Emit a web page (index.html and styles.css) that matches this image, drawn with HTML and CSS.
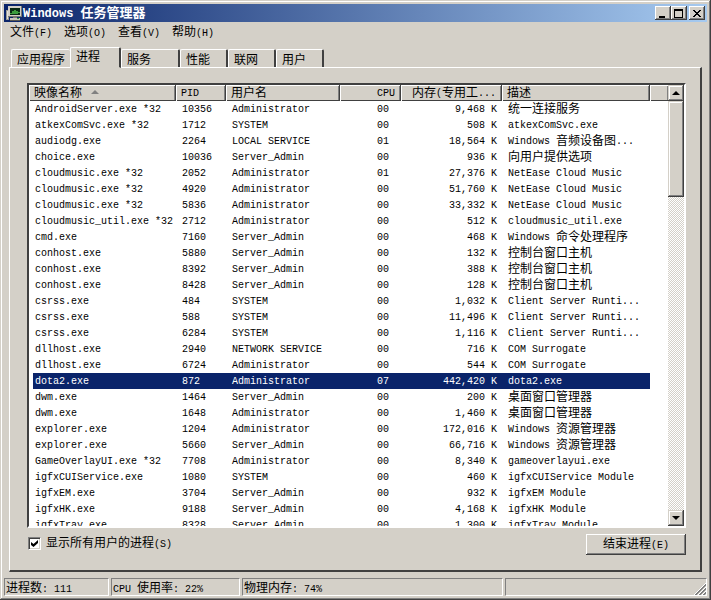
FILE: index.html
```html
<!DOCTYPE html>
<html lang="zh-CN">
<head>
  <meta charset="UTF-8" />
  <meta name="viewport" content="width=device-width, initial-scale=1.0"/>
  <title>Windows 任务管理器</title>
  <link rel="stylesheet" href="styles.css">
</head>
<body>
<div class="window">

  <!-- Title bar -->
  <header class="titlebar">
    <svg class="app-icon" width="16" height="16" viewBox="0 0 16 16" shape-rendering="crispEdges">
      <path d="M0 5h3v10H0z" fill="#9a9a94"/>
      <path d="M1 6h1v8H1z" fill="#e4e2da"/>
      <path d="M2 1h14v11H2z" fill="#77776f"/>
      <path d="M2 1h13v10H2z" fill="#d4d0c8"/>
      <path d="M4 3h10v7H4z" fill="#0b2b14"/>
      <path d="M4 8h2V6h2V5h2v1h2v1h2v1h-2v1H4z" fill="#3c9c3c"/>
      <path d="M7 12h4v1H7z" fill="#77776f"/>
      <path d="M4 13h10v2H4z" fill="#c8c6bc"/>
      <path d="M4 15h10v1H4z" fill="#55554f"/>
      <path d="M11 13h2v1h-2z" fill="#3c9c3c"/>
    </svg>
    <h1>Windows <span class="cn">任务管理器</span></h1>
    <div class="title-buttons">
      <button class="title-btn" aria-label="最小化">
        <svg width="10" height="9" viewBox="0 0 10 9"><path d="M1 7h6v2H1z"/></svg>
      </button>
      <button class="title-btn" aria-label="最大化">
        <svg width="10" height="9" viewBox="0 0 10 9" shape-rendering="crispEdges"><path fill-rule="evenodd" d="M0 0h9v9H0zM1 2v6h7V2z"/></svg>
      </button>
      <button class="title-btn close" aria-label="关闭">
        <svg width="10" height="9" viewBox="0 0 10 9" shape-rendering="crispEdges"><path d="M1 1h2v1h1v1h2V2h1V1h2v1H8v1H7v1H6v1h1v1h1v1h1v1H7V7H6V6H4v1H3v1H1V7h1V6h1V5h1V4H3V3H2V2H1z"/></svg>
      </button>
    </div>
  </header>

  <nav class="menu">
    <button><span class="cn">文件</span>(F)</button>
    <button><span class="cn">选项</span>(O)</button>
    <button><span class="cn">查看</span>(V)</button>
    <button><span class="cn">帮助</span>(H)</button>
  </nav>

  <div class="tabs" role="tablist">
    <button class="tab tab-long cn" role="tab">应用程序</button>
    <button class="tab active cn" role="tab" aria-selected="true">进程</button>
    <button class="tab tab-long cn" role="tab">服务</button>
    <button class="tab cn" role="tab">性能</button>
    <button class="tab cn" role="tab">联网</button>
    <button class="tab cn" role="tab">用户</button>
  </div>

  <main class="panel">
    <div class="list">
      <div class="list-view">
        <table>
          <colgroup>
            <col class="col-name"><col class="col-pid"><col class="col-user"><col class="col-cpu"><col class="col-mem"><col class="col-desc"><col>
          </colgroup>
          <thead>
            <tr>
              <th><span class="cn">映像名称</span><i class="sort"></i></th>
              <th>PID</th>
              <th><span class="cn">用户名</span></th>
              <th class="num">CPU</th>
              <th class="num"><span class="cn">内存</span>(<span class="cn">专用工</span>...</th>
              <th><span class="cn">描述</span></th>
              <th></th>
            </tr>
          </thead>
          <tbody id="processList"></tbody>
        </table>
      </div>
      <div class="scrollbar">
        <button class="scroll-btn" aria-label="向上"><i class="arrow up"></i></button>
        <div class="thumb"></div>
        <button class="scroll-btn bottom" aria-label="向下"><i class="arrow down"></i></button>
      </div>
    </div>

    <div class="actions">
      <label class="show-all" for="showAll">
        <input type="checkbox" id="showAll" checked>
        <span><span class="cn">显示所有用户的进程</span>(S)</span>
      </label>
      <button class="end-btn"><span class="cn">结束进程</span>(E)</button>
    </div>
  </main>

  <footer class="status">
    <div class="pane pane-count"><span class="cn">进程数</span>: 111</div>
    <div class="pane pane-cpu">CPU <span class="cn">使用率</span>: 22%</div>
    <div class="pane pane-mem"><span class="cn">物理内存</span>: 74%</div>
    <div class="pane pane-rest">
      <svg width="12" height="12" viewBox="0 0 12 12">
        <path d="M0 12L12 0M4 12l8-8M8 12l4-4" stroke="#fff" fill="none"/>
        <path d="M1 12L12 1M2 12L12 2M5 12l7-7M6 12l6-6M9 12l3-3M10 12l2-2" stroke="#808080" fill="none"/>
      </svg>
    </div>
  </footer>

</div>

  <script>
    // name, pid, user, cpu, memory, description
    const processes = [
      ["AndroidServer.exe *32", "10356", "Administrator", "00", "9,468 K", "统一连接服务"],
      ["atkexComSvc.exe *32", "1712", "SYSTEM", "00", "508 K", "atkexComSvc.exe"],
      ["audiodg.exe", "2264", "LOCAL SERVICE", "01", "18,564 K", "Windows 音频设备图..."],
      ["choice.exe", "10036", "Server_Admin", "00", "936 K", "向用户提供选项"],
      ["cloudmusic.exe *32", "2052", "Administrator", "01", "27,376 K", "NetEase Cloud Music"],
      ["cloudmusic.exe *32", "4920", "Administrator", "00", "51,760 K", "NetEase Cloud Music"],
      ["cloudmusic.exe *32", "5836", "Administrator", "00", "33,332 K", "NetEase Cloud Music"],
      ["cloudmusic_util.exe *32", "2712", "Administrator", "00", "512 K", "cloudmusic_util.exe"],
      ["cmd.exe", "7160", "Server_Admin", "00", "468 K", "Windows 命令处理程序"],
      ["conhost.exe", "5880", "Server_Admin", "00", "132 K", "控制台窗口主机"],
      ["conhost.exe", "8392", "Server_Admin", "00", "388 K", "控制台窗口主机"],
      ["conhost.exe", "8428", "Server_Admin", "00", "128 K", "控制台窗口主机"],
      ["csrss.exe", "484", "SYSTEM", "00", "1,032 K", "Client Server Runti..."],
      ["csrss.exe", "588", "SYSTEM", "00", "11,496 K", "Client Server Runti..."],
      ["csrss.exe", "6284", "SYSTEM", "00", "1,116 K", "Client Server Runti..."],
      ["dllhost.exe", "2940", "NETWORK SERVICE", "00", "716 K", "COM Surrogate"],
      ["dllhost.exe", "6724", "Administrator", "00", "544 K", "COM Surrogate"],
      ["dota2.exe", "872", "Administrator", "07", "442,420 K", "dota2.exe"],
      ["dwm.exe", "1464", "Server_Admin", "00", "200 K", "桌面窗口管理器"],
      ["dwm.exe", "1648", "Administrator", "00", "1,460 K", "桌面窗口管理器"],
      ["explorer.exe", "1204", "Administrator", "00", "172,016 K", "Windows 资源管理器"],
      ["explorer.exe", "5660", "Server_Admin", "00", "66,716 K", "Windows 资源管理器"],
      ["GameOverlayUI.exe *32", "7708", "Administrator", "00", "8,340 K", "gameoverlayui.exe"],
      ["igfxCUIService.exe", "1080", "SYSTEM", "00", "460 K", "igfxCUIService Module"],
      ["igfxEM.exe", "3704", "Server_Admin", "00", "932 K", "igfxEM Module"],
      ["igfxHK.exe", "9188", "Server_Admin", "00", "4,168 K", "igfxHK Module"],
      ["igfxTray.exe", "8328", "Server_Admin", "00", "1,300 K", "igfxTray Module"]
    ];

    const processList = document.getElementById("processList");

    function renderProcesses(selected) {
      processList.innerHTML = processes.map(p => {
        const cells = p.map((text, i) => {
          const cls = i === 3 || i === 4 ? ' class="num"' : "";
          return `<td${cls}>${text.replace(/[\u4e00-\u9fff]+/g, '<span class="cn">$&</span>')}</td>`;
        }).join("");
        return `<tr${p[0] === selected ? ' class="selected"' : ""}>${cells}<td></td></tr>`;
      }).join("");
    }

    renderProcesses("dota2.exe");
  </script>
</body>
</html>
```

FILE: styles.css
```css
* {
  box-sizing: border-box;
}

body {
  margin: 0;
  background: #d4d0c8;
  color: #000;
  font-family: "Liberation Mono", "Noto Sans CJK SC", monospace;
  font-size: 10px;
  line-height: 16px;
}

button {
  margin: 0;
  padding: 0;
  border: none;
  background: #d4d0c8;
  color: inherit;
  font: inherit;
}

.cn {
  font-family: "Noto Sans CJK SC", sans-serif;
  font-size: 12px;
  line-height: 16px;
}

.window {
  display: flex;
  flex-direction: column;
  height: 100vh;
  padding: 4px;
  box-shadow: inset -1px -1px #404040, inset 1px 1px #d4d0c8, inset -2px -2px #808080, inset 2px 2px #fff;
}

/* title bar */
.titlebar {
  display: flex;
  align-items: center;
  height: 18px;
  padding: 0 2px;
  background: linear-gradient(to right, #0a246a, #a6caf0);
}

.titlebar h1 {
  flex: 1;
  margin: 0 0 0 1px;
  color: #fff;
  font-size: 12px;
  line-height: 18px;
  white-space: nowrap;
}

.titlebar .cn {
  font-size: 13px;
  line-height: 18px;
}

.title-buttons {
  display: flex;
}

.title-btn {
  display: flex;
  align-items: center;
  justify-content: center;
  width: 16px;
  height: 14px;
  box-shadow: inset -1px -1px #404040, inset 1px 1px #fff, inset -2px -2px #808080;
}

.title-btn.close {
  margin-left: 2px;
}

/* menu */
.menu {
  display: flex;
  gap: 12px;
  height: 20px;
  padding: 0 6px;
}

.menu button {
  background: none;
}

/* tabs */
.tabs {
  display: flex;
  align-items: flex-end;
  height: 26px;
  margin: 0 6px -1px 7px;
}

.tab {
  width: 48px;
  height: 19px;
  padding: 0 5px;
  border-top: 1px solid #fff;
  border-left: 1px solid #fff;
  border-right: 2px solid #404040;
  border-bottom: 1px solid #fff;
  border-radius: 2px 2px 0 0;
  text-align: left;
}

.tab-long {
  width: 59px;
}

.tab:first-child {
  border-right: none;
}

.tab.active {
  width: 51px;
  height: 21px;
  padding-bottom: 4px;
  border-bottom-color: #d4d0c8;
  z-index: 1;
}

/* panel */
.panel {
  display: flex;
  flex: 1;
  flex-direction: column;
  min-height: 0;
  margin: 0 5px;
  padding: 15px 14px;
  border: 1px solid #fff;
  border-right: 2px solid #404040;
  border-bottom: 2px solid #404040;
}

.list {
  display: flex;
  flex: 1;
  min-height: 0;
  margin: 0 0 0 3px;
  border: 2px solid;
  border-color: #404040 #fff #fff #404040;
  background: #fff;
}

.list-view {
  flex: 1;
  overflow: hidden;
}

table {
  width: 100%;
  table-layout: fixed;
  border-collapse: separate;
  border-spacing: 0;
}

.col-name { width: 147px; }
.col-pid { width: 50px; }
.col-user { width: 114px; }
.col-cpu { width: 61px; }
.col-mem { width: 101px; }
.col-desc { width: 148px; }

th, td {
  height: 16px;
  text-align: left;
  vertical-align: top;
  white-space: nowrap;
  font-weight: normal;
  line-height: 14px;
}

th {
  padding: 2px 5px 0;
  border-right: 1px solid #404040;
  background: #d4d0c8;
  box-shadow: inset 1px 1px #fff, inset 0 -1px #404040, inset -1px 0 #808080;
}

th:last-child {
  border-right: none;
}

td {
  padding: 2px 12px 0 6px;
}

td:first-child {
  padding: 2px 0 0 2px;
  border-left: 4px solid #fff;
}

td:nth-child(5) {
  padding-right: 5px;
}

tr .num {
  text-align: right;
}

/* keeps mixed rows as high as the plain ones */
td .cn, th .cn {
  line-height: 0;
  vertical-align: -1px;
}

.selected td:not(:last-child) {
  background: #0a246a;
  color: #fff;
}

.sort {
  display: inline-block;
  margin-left: 9px;
  border: 4px solid transparent;
  border-top: none;
  border-bottom-color: #808080;
  vertical-align: 2px;
}

/* scrollbar */
.scrollbar {
  display: flex;
  flex-direction: column;
  width: 16px;
  background: repeating-conic-gradient(#fff 0 25%, #d4d0c8 0 50%) 0 0 / 2px 2px;
}

.scroll-btn, .thumb {
  flex: none;
  width: 16px;
  height: 16px;
  background: #d4d0c8;
  box-shadow: inset -1px -1px #404040, inset 1px 1px #d4d0c8, inset -2px -2px #808080, inset 2px 2px #fff;
}

.scroll-btn {
  display: flex;
  align-items: center;
  justify-content: center;
}

.thumb {
  height: 96px;
}

.scroll-btn.bottom {
  margin-top: auto;
}

.arrow {
  border: 4px solid transparent;
}

.arrow.up {
  border-top: none;
  border-bottom-color: #000;
}

.arrow.down {
  border-bottom: none;
  border-top-color: #000;
}

/* bottom row of the panel */
.actions {
  display: flex;
  align-items: flex-start;
  justify-content: space-between;
  padding: 6px 0 0 4px;
}

.show-all {
  display: flex;
  align-items: center;
  gap: 5px;
}

.show-all input {
  display: flex;
  align-items: center;
  justify-content: center;
  width: 13px;
  height: 13px;
  margin: 0;
  appearance: none;
  border: 1px solid;
  border-color: #808080 #fff #fff #808080;
  background: #fff;
  box-shadow: inset 1px 1px #404040, inset -1px -1px #d4d0c8;
}

.show-all input:checked::after {
  content: "";
  width: 7px;
  height: 7px;
  background: #000;
  clip-path: polygon(0 29%, 36% 57%, 100% 0, 100% 43%, 36% 100%, 0 71%);
}

.end-btn {
  width: 100px;
  height: 21px;
  box-shadow: inset -1px -1px #404040, inset 1px 1px #fff, inset -2px -2px #808080;
}

/* status bar */
.status {
  display: flex;
  gap: 2px;
  height: 18px;
  margin-top: 6px;
}

.pane {
  padding: 0 1px;
  border: 1px solid;
  border-color: #808080 #fff #fff #808080;
  line-height: 14px;
  white-space: nowrap;
}

.pane-count { width: 105px; }
.pane-cpu { width: 129px; }
.pane-mem { width: 261px; }

.pane-rest {
  display: flex;
  flex: 1;
  align-items: flex-end;
  justify-content: flex-end;
  padding: 0;
}
```
